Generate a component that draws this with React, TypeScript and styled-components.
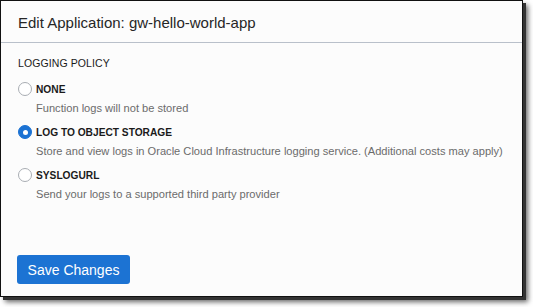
import React from "react";
import styled, { createGlobalStyle } from "styled-components";

const Global = createGlobalStyle`
  html, body { margin: 0; padding: 0; background: #ffffff; }
  body { font-family: "Liberation Sans", Arial, sans-serif; }
`;

const Stage = styled.div`
  width: 533px;
  height: 307px;
  box-sizing: border-box;
`;

const Dialog = styled.div`
  width: 523px;
  height: 297px;
  box-sizing: border-box;
  border: 1px solid #111;
  background: #fcfcfc;
  box-shadow: 3px 3px 0 #333, 5px 5px 5px rgba(0, 0, 0, 0.6);
  display: flex;
  flex-direction: column;
`;

const Header = styled.div`
  height: 42px;
  box-sizing: border-box;
  border-bottom: 1px solid #b9c0ca;
  display: flex;
  align-items: center;
  padding-left: 17px;
  padding-top: 1px;
  font-size: 15px;
  color: #262626;
`;

const Body = styled.div`
  flex: 1;
  padding: 12px 17px 0 17px;
  display: flex;
  flex-direction: column;
`;

const SectionTitle = styled.div`
  font-size: 10.5px;
  line-height: 16px;
  font-weight: 500;
  color: #1a1a1a;
  letter-spacing: 0.1px;
  margin-bottom: 9px;
`;

const Option = styled.div`
  display: flex;
  flex-direction: column;
  margin-bottom: 7.5px;
`;

const OptionRow = styled.div`
  display: flex;
  align-items: center;
  height: 18px;
`;

const Radio = styled.span<{ $checked?: boolean }>`
  width: 14px;
  height: 14px;
  box-sizing: border-box;
  border-radius: 50%;
  border: 1px solid ${(p) => (p.$checked ? "#1b72d3" : "#a9adb3")};
  background: ${(p) => (p.$checked ? "#1b72d3" : "#ffffff")};
  display: flex;
  align-items: center;
  justify-content: center;
  margin-right: 4px;
  flex: none;
  &::after {
    content: "";
    width: 5px;
    height: 5px;
    border-radius: 50%;
    background: #ffffff;
    display: ${(p) => (p.$checked ? "block" : "none")};
  }
`;

const OptionLabel = styled.span`
  font-size: 10.2px;
  font-weight: 700;
  color: #1a1a1a;
`;

const OptionDesc = styled.div`
  margin-top: 2.5px;
  padding-left: 18px;
  font-size: 11.1px;
  line-height: 15px;
  color: #6b6b6b;
`;

const Footer = styled.div`
  padding: 0 16px 12px 16px;
`;

const PrimaryButton = styled.button`
  height: 29px;
  width: 113px;
  border: none;
  border-radius: 3px;
  background: #1c73d3;
  color: #ffffff;
  font-family: "Liberation Sans", Arial, sans-serif;
  font-size: 14px;
  padding: 0;
  cursor: pointer;
`;

const options = [
  { label: "NONE", desc: "Function logs will not be stored", checked: false },
  {
    label: "LOG TO OBJECT STORAGE",
    desc: "Store and view logs in Oracle Cloud Infrastructure logging service. (Additional costs may apply)",
    checked: true,
  },
  { label: "SYSLOGURL", desc: "Send your logs to a supported third party provider", checked: false },
];

export default function App() {
  return (
    <Stage>
      <Global />
      <Dialog>
        <Header>Edit Application: gw-hello-world-app</Header>
        <Body>
          <SectionTitle>LOGGING POLICY</SectionTitle>
          {options.map((o) => (
            <Option key={o.label}>
              <OptionRow>
                <Radio $checked={o.checked} />
                <OptionLabel>{o.label}</OptionLabel>
              </OptionRow>
              <OptionDesc>{o.desc}</OptionDesc>
            </Option>
          ))}
        </Body>
        <Footer>
          <PrimaryButton>Save Changes</PrimaryButton>
        </Footer>
      </Dialog>
    </Stage>
  );
}
